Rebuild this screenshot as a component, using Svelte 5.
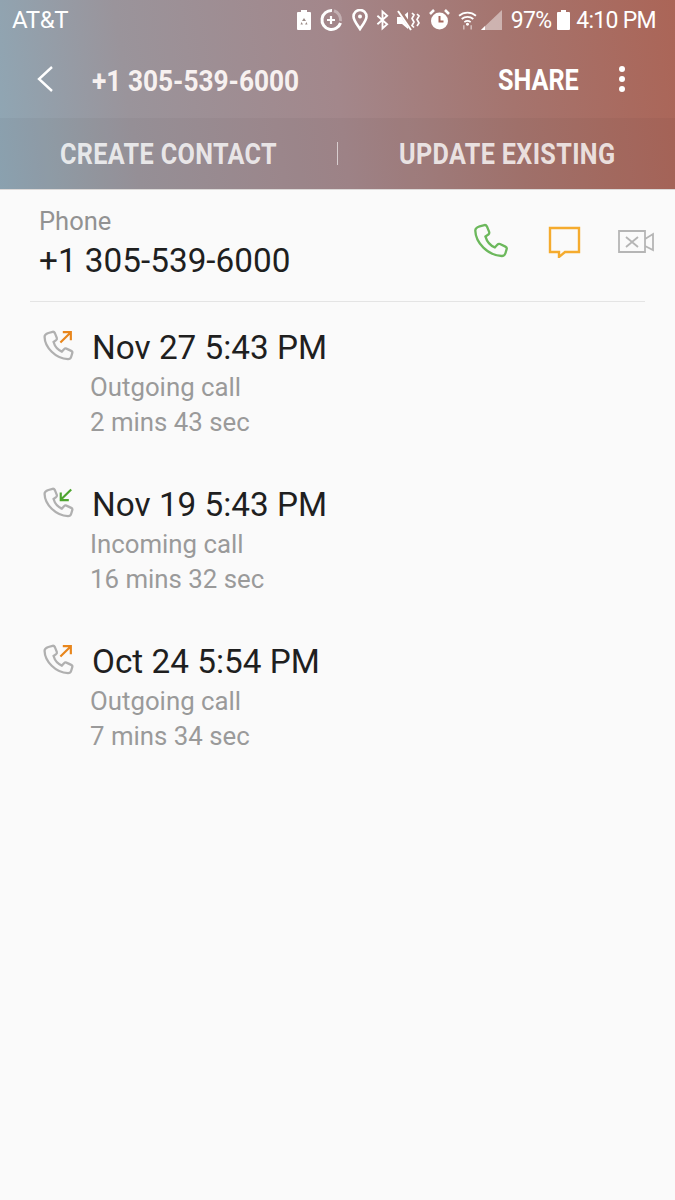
<script>
const calls = [
	{ date: 'Nov 27 5:43 PM', kind: 'Outgoing call', duration: '2 mins 43 sec', outgoing: true },
	{ date: 'Nov 19 5:43 PM', kind: 'Incoming call', duration: '16 mins 32 sec', outgoing: false },
	{ date: 'Oct 24 5:54 PM', kind: 'Outgoing call', duration: '7 mins 34 sec', outgoing: true },
];

const handset =
	'M7 2.5 L10.5 1.5 C11.5 1.3 12 1.8 12.4 2.6 L14 6.5 C14.3 7.4 14 8 13.4 8.5 L11.3 10 C12.3 13.5 15 16.6 18.2 18 L20 16 C20.6 15.4 21.3 15.2 22 15.5 L26 17.4 C26.8 17.8 27.2 18.4 26.9 19.3 L26 22.3 C25.6 23.6 24.6 24.3 23.3 24.3 C13 23.8 4 14.5 3.8 5.6 C3.8 4 5.4 3 7 2.5 Z';
</script>

<div class="page">
	<header class="header">
		<div class="status">
			<span class="carrier">AT&amp;T</span>
			<div class="status-right">
				<svg class="st" width="14" height="20" viewBox="0 0 14 20">
					<path d="M4 0h6v2h3a1 1 0 0 1 1 1v16a1 1 0 0 1-1 1H1a1 1 0 0 1-1-1V3a1 1 0 0 1 1-1h3z" fill="#fff" />
					<path d="M7 8l2 3H5zM4.500 12l1.500 2.500H3.500zM9.500 12l1 2.500H8z" fill="#9c8d89" />
				</svg>
				<svg class="st" width="24" height="24" viewBox="0 0 24 24">
					<path d="M13 2.500A9.500 9.500 0 1 0 21.500 15" fill="none" stroke="#fff" stroke-width="3" />
					<path d="M15 2.800A9.500 9.500 0 0 1 21.500 13" fill="none" stroke="#fff" stroke-opacity=".35" stroke-width="3" />
					<path d="M12 8v8M8 12h8" stroke="#fff" stroke-width="2.200" />
				</svg>
				<svg class="st" width="16" height="22" viewBox="0 0 16 22">
					<path d="M8 20C4 14 1.500 11 1.500 7.500a6.500 6.500 0 0 1 13 0C14.500 11 12 14 8 20z" fill="none" stroke="#fff" stroke-width="2.600" />
					<circle cx="8" cy="7.500" r="2" fill="#fff" />
				</svg>
				<svg class="st" width="13" height="22" viewBox="0 0 14 22">
					<path d="M1.500 6.500L12 15.500 7 20V2l5 4.500L1.500 15.500" fill="none" stroke="#fff" stroke-width="2" />
				</svg>
				<svg class="st" width="23" height="21" viewBox="0 0 23 21">
					<path d="M0 7h5l6-5v17l-6-5H0z" fill="#fff" />
					<path d="M2 0l13 19" stroke="#a37c74" stroke-width="4" />
					<path d="M1 1l13 19" stroke="#fff" stroke-width="2" />
					<path d="M15 3l2 2-2 3.500 2 3.500-2 3.500 2 2M20 4l2 2-2 3.500 2 3.500-2 3" fill="none" stroke="#fff" stroke-width="1.700" />
				</svg>
				<svg class="st" width="21" height="22" viewBox="0 0 21 22">
					<circle cx="10.500" cy="12" r="8.500" fill="#fff" />
					<path d="M10.500 7v5.500h4" fill="none" stroke="#a5675c" stroke-width="2" />
					<path d="M1 5l4-4M20 5l-4-4" stroke="#fff" stroke-width="2.500" />
				</svg>
				<svg class="st wifi" width="19" height="22" viewBox="0 0 18 20">
					<path d="M1 6a12 12 0 0 1 16 0M3.500 9a8.500 8.500 0 0 1 11 0M6 12a5 5 0 0 1 6 0" fill="none" stroke="#fff" stroke-width="1.700" />
					<circle cx="9" cy="14" r="1.400" fill="#fff" />
					<path d="M5.500 15v4M12.500 15v4" stroke="#fff" stroke-opacity=".5" stroke-width="1.500" />
				</svg>
				<svg class="st signal" width="21" height="20" viewBox="0 0 21 20">
					<path d="M21 0v20H0z" fill="#fff" fill-opacity=".45" />
					<path d="M0 20h4v-4z" fill="#fff" />
				</svg>
				<span class="pct">97%</span>
				<svg class="st batt" width="13" height="20" viewBox="0 0 13 20">
					<path d="M4 0h5v2h3a1 1 0 0 1 1 1v16a1 1 0 0 1-1 1H1a1 1 0 0 1-1-1V3a1 1 0 0 1 1-1h3z" fill="#fff" />
				</svg>
				<span class="clock">4:10 PM</span>
			</div>
		</div>

		<div class="toolbar">
			<svg class="back" width="18" height="28" viewBox="0 0 18 28">
				<path d="M16 2L3 14l13 12" fill="none" stroke="#fff" stroke-width="2.400" />
			</svg>
			<span class="title cond">+1 305-539-6000</span>
			<span class="share cond">SHARE</span>
			<div class="more">
				<i></i><i></i><i></i>
			</div>
		</div>

		<div class="actions">
			<span class="action cond">CREATE CONTACT</span>
			<span class="divider"></span>
			<span class="action cond">UPDATE EXISTING</span>
		</div>
	</header>

	<section class="phone">
		<div class="phone-text">
			<div class="phone-label">Phone</div>
			<div class="phone-number">+1 305-539-6000</div>
		</div>
		<div class="phone-icons">
			<svg width="41" height="38" viewBox="0 0 30 28">
				<path d={handset} fill="none" stroke="#6cb85c" stroke-width="1.700" />
			</svg>
			<svg width="33" height="32" viewBox="0 0 33 32">
				<path d="M2 2h29v24H17l-6 5v-5H2z" fill="none" stroke="#f5ab2e" stroke-width="2.400" />
			</svg>
			<svg width="36" height="24" viewBox="0 0 36 24">
				<path d="M1 1h26v21H1zM27 9l8-5v16l-8-4" fill="none" stroke="#b5b5b5" stroke-width="1.800" />
				<path d="M8 7l12 10M20 7L8 17" stroke="#b5b5b5" stroke-width="1.800" />
			</svg>
		</div>
	</section>

	<ul class="calls">
		{#each calls as call}
			<li class="call">
				<svg class="call-icon" width="36" height="36" viewBox="0 0 30 30">
					<path d={handset} fill="none" stroke="#b0b0b0" stroke-width="1.900" />
					{#if call.outgoing}
						<path d="M17 10.500l8.500-8.500M19 1.800h6.700v6.700" fill="none" stroke="#e8861c" stroke-width="1.800" />
					{:else}
						<path d="M26 2l-8.500 8.500M17.300 4.500v6.500h6.700" fill="none" stroke="#4ea52f" stroke-width="1.800" />
					{/if}
				</svg>
				<div class="call-text">
					<div class="call-date">{call.date}</div>
					<div class="call-sub">{call.kind}</div>
					<div class="call-sub">{call.duration}</div>
				</div>
			</li>
		{/each}
	</ul>
</div>

<style>
	:global(body) {
		margin: 0;
		background: #fafafa;
	}

	.page {
		width: 675px;
		height: 1200px;
		overflow: hidden;
		background: #fafafa;
		font-family: Roboto, "Liberation Sans", sans-serif;
	}

	.header {
		height: 189px;
		background: linear-gradient(82deg, #8fa7b5 0%, #9a949b 20%, #a3878b 50%, #a5746e 75%, #ab6557 100%);
		color: #fff;
		border-bottom: 1px solid #dcd9d8;
	}

	.status {
		height: 40px;
		padding: 0 19px 0 12px;
		display: flex;
		align-items: center;
		justify-content: space-between;
	}

	.carrier {
		font-size: 24px;
		letter-spacing: -0.4px;
	}

	.status-right {
		display: flex;
		align-items: center;
		gap: 8.4px;
		font-size: 23px;
		letter-spacing: -0.7px;
	}

	.st {
		display: block;
	}

	.signal {
		margin-left: -4px;
	}

	.batt {
		margin-left: -3px;
	}

	.clock {
		margin-left: -2px;
	}

	.cond {
		display: inline-block;
		font-weight: 700;
		white-space: nowrap;
		transform: scaleX(0.84);
		transform-origin: left center;
	}

	.toolbar {
		height: 78px;
		display: flex;
		align-items: center;
		padding-left: 36px;
	}

	.back {
		margin-right: 38px;
	}

	.title {
		font-size: 30px;
		width: 370px;
		margin-right: 36px;
		margin-top: 4px;
		color: #f7f1f0;
		transform: scaleX(0.875);
	}

	.title,
	.share,
	.action {
		line-height: 1;
	}

	.share {
		font-size: 30px;
		width: 107px;
		margin-top: 2px;
	}

	.more {
		display: flex;
		flex-direction: column;
		gap: 4px;
		margin-left: 14px;
	}

	.more i {
		display: block;
		width: 6px;
		height: 6px;
		border-radius: 50%;
		background: #fff;
	}

	.actions {
		height: 71px;
		display: flex;
		align-items: center;
		background: rgba(0, 0, 0, 0.03);
		color: rgba(255, 255, 255, 0.8);
	}

	.action {
		font-size: 30px;
		letter-spacing: 0.4px;
	}

	.action:first-child {
		margin-left: 60px;
		width: 277px;
	}

	.action:last-child {
		margin-left: 61px;
	}

	.divider {
		width: 1px;
		height: 23px;
		background: rgba(255, 255, 255, 0.6);
	}

	.phone {
		margin: 0 30px;
		height: 112px;
		border-bottom: 1px solid #e4e4e4;
		display: flex;
		justify-content: space-between;
		box-sizing: border-box;
		padding-left: 10px;
	}

	.phone-text {
		padding-top: 16px;
	}

	.phone-label {
		font-size: 25.5px;
		line-height: 30px;
		color: #929292;
		margin-left: -1px;
	}

	.phone-number {
		font-size: 33.3px;
		line-height: 42px;
		margin-top: 4px;
		color: #1f1f1f;
		margin-left: -1px;
	}

	.phone-icons {
		display: flex;
		align-items: center;
		gap: 37px;
		height: 104px;
		margin-right: -9px;
	}

	.calls {
		list-style: none;
		margin: 0;
		padding: 0;
	}

	.call {
		display: flex;
		height: 157px;
		padding-left: 40px;
		box-sizing: border-box;
	}

	.call-icon {
		margin-top: 28px;
		flex-shrink: 0;
	}

	.call-text {
		margin-left: 14px;
		padding-top: 26px;
	}

	.call-date {
		font-size: 33.3px;
		line-height: 40px;
		color: #1f1f1f;
		margin-left: 2px;
	}

	.call-sub {
		font-size: 25.8px;
		line-height: 35px;
		color: #9a9a9a;
	}

	.call-date + .call-sub {
		margin-top: 2px;
	}
</style>
